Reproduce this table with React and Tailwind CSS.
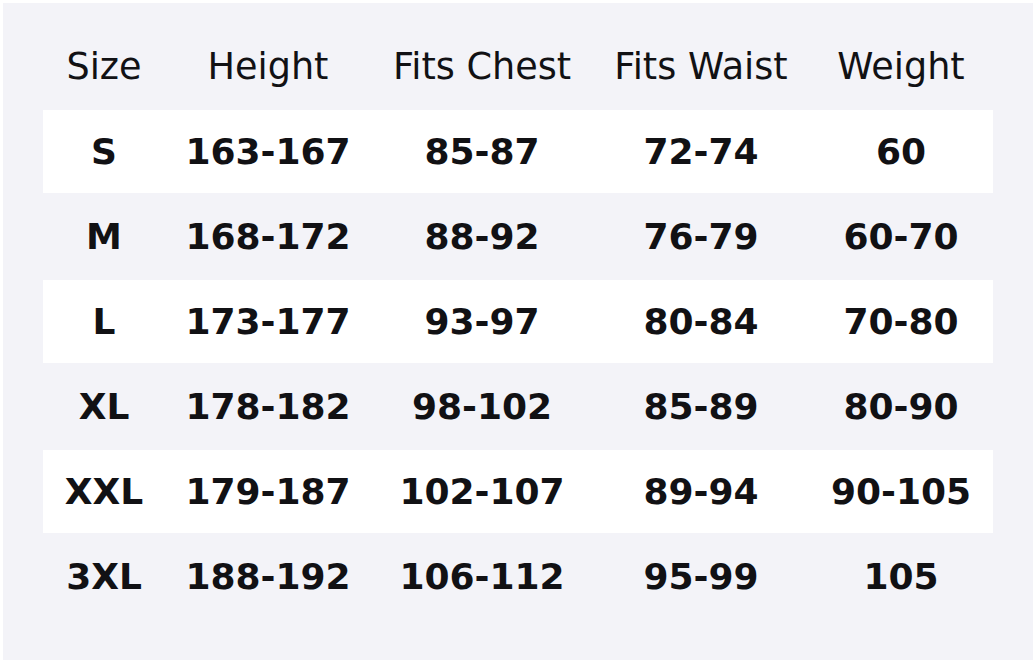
import React from 'react';

const columns = ['Size', 'Height', 'Fits Chest', 'Fits Waist', 'Weight'];
const widths = ['w-[122px]', 'w-[206px]', 'w-[222px]', 'w-[216px]', 'w-[184px]'];

const rows = [
  ['S', '163-167', '85-87', '72-74', '60'],
  ['M', '168-172', '88-92', '76-79', '60-70'],
  ['L', '173-177', '93-97', '80-84', '70-80'],
  ['XL', '178-182', '98-102', '85-89', '80-90'],
  ['XXL', '179-187', '102-107', '89-94', '90-105'],
  ['3XL', '188-192', '106-112', '95-99', '105'],
];

const App = () => {
  return (
    <div className="w-[1036px] h-[663px] bg-white p-[3px]">
      <div
        className="w-full h-full bg-[#f3f3f8] pt-[22px] px-[40px] text-[#111114]"
        style={{ fontFamily: '"DejaVu Sans", "Liberation Sans", sans-serif' }}
      >
        {/* header */}
        <div className="flex h-[85px] items-center text-[36.6px] font-normal">
          {columns.map((c, i) => (
            <div key={c} className={`${widths[i]} text-center`}>{c}</div>
          ))}
        </div>

        {/* body rows */}
        {rows.map((r, ri) => (
          <div
            key={r[0]}
            className={
              ri % 2 === 0
                ? 'flex h-[83px] items-center bg-white text-[36px] font-bold'
                : 'flex h-[87px] items-center text-[36px] font-bold'
            }
          >
            {r.map((v, i) => (
              <div key={i} className={`${widths[i]} text-center pt-[1px]`}>{v}</div>
            ))}
          </div>
        ))}
      </div>
    </div>
  );
};

export default App;
